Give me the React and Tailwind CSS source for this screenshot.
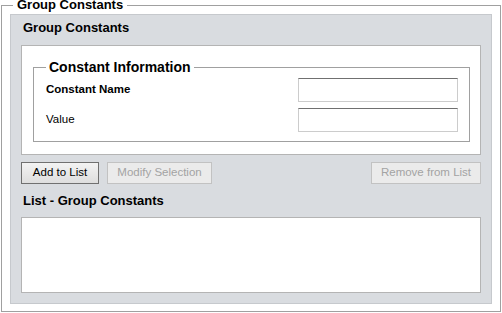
export default function App() {
  return (
    <div
      className="w-[502px] h-[313px] bg-white overflow-hidden text-[#000]"
      style={{ fontFamily: '"Liberation Sans", Arial, sans-serif' }}
    >
      <fieldset className="ml-[1px] w-[500px] h-[312px] border border-[#a0a0a0] pl-[8px] pr-[8px] pt-[4px]">
        <legend className="ml-[3px] px-[4px] text-[13px] leading-[10px] font-bold">
          Group Constants
        </legend>
        <div className="h-[290px] bg-[#d9dce0] border border-[#c6c9cd] px-[10px] flex flex-col">
          <div className="h-[30px] pt-[6px] pl-[2px] text-[13px] leading-[14px] font-bold">Group Constants</div>
          <div className="h-[110px] bg-white border border-[#b4b4b4] pt-[14px] pl-[11px] pr-[10px]">
            <fieldset className="h-[82px] border border-[#a0a0a0] pl-[12px] pr-[11px]">
              <legend className="px-[3px] text-[14px] leading-[14px] font-bold">
                Constant Information
              </legend>
              <div className="flex flex-col gap-[6px] pt-[4px]">
                <div className="flex items-center justify-between">
                  <span className="text-[11.5px] font-bold">Constant Name</span>
                  <input className="w-[160px] h-[24px] bg-white border border-[#cccccc] border-t-[#707070] outline-none" />
                </div>
                <div className="flex items-center justify-between">
                  <span className="text-[11.5px]">Value</span>
                  <input className="w-[160px] h-[24px] bg-white border border-[#cccccc] border-t-[#707070] outline-none" />
                </div>
              </div>
            </fieldset>
          </div>
          <div className="flex items-center mt-[7px] gap-[8px]">
            <button className="w-[78px] h-[22px] border border-[#707070] bg-gradient-to-b from-[#f3f3f3] to-[#dedede] text-[11.5px]">
              Add to List
            </button>
            <button disabled className="w-[105px] h-[22px] border border-[#c2c2c2] bg-[#ebebeb] text-[11.5px] text-[#a3a3a3]">
              Modify Selection
            </button>
            <button disabled className="ml-auto w-[110px] h-[22px] border border-[#c2c2c2] bg-[#ebebeb] text-[11.5px] text-[#a3a3a3]">
              Remove from List
            </button>
          </div>
          <div className="h-[33px] pt-[10px] pl-[2px] text-[13px] leading-[14px] font-bold">List - Group Constants</div>
          <div className="h-[76px] bg-white border border-[#b4b4b4]" />
        </div>
      </fieldset>
    </div>
  );
}
